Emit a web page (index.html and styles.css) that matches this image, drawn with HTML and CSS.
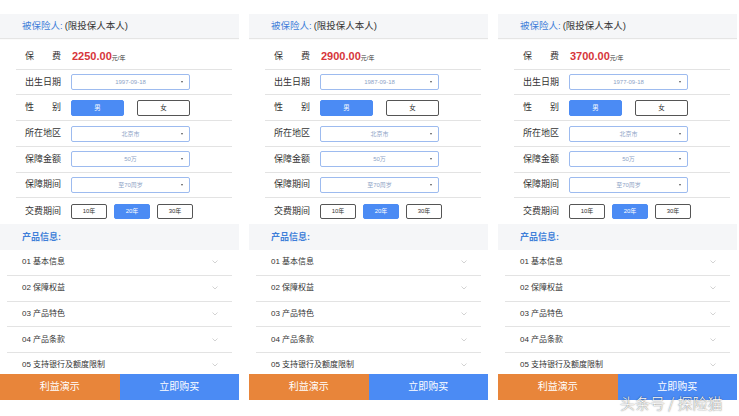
FILE: index.html
```html
<!DOCTYPE html>
<html lang="zh">
<head>
<meta charset="utf-8">
<link rel="stylesheet" href="styles.css">
</head>
<body>
<div class="screens">

  <div class="panel">
    <div class="insured"><span class="key">被保险人:</span><span class="note">(限投保人本人)</span></div>
    <div class="form">
      <div class="row"><div class="label"><span>保</span><span>费</span></div><div class="price">2250.00<span class="unit">元/年</span></div></div>
      <div class="row"><div class="label"><span>出生日期</span></div><div class="select">1997-09-18</div></div>
      <div class="row"><div class="label"><span>性</span><span>别</span></div><div class="seg gender"><div class="btn on">男</div><div class="btn">女</div></div></div>
      <div class="row"><div class="label"><span>所在地区</span></div><div class="select">北京市</div></div>
      <div class="row"><div class="label"><span>保障金额</span></div><div class="select">50万</div></div>
      <div class="row"><div class="label"><span>保障期间</span></div><div class="select">至70周岁</div></div>
      <div class="row"><div class="label"><span>交费期间</span></div><div class="seg years"><div class="btn">10年</div><div class="btn on">20年</div><div class="btn">30年</div></div></div>
    </div>
    <div class="section">产品信息:</div>
    <div class="list">
      <div class="item"><span>01 基本信息</span><svg class="chev" viewBox="0 0 6 4"><polyline points="0.5,0.5 3,3 5.5,0.5"/></svg></div>
      <div class="item"><span>02 保障权益</span><svg class="chev" viewBox="0 0 6 4"><polyline points="0.5,0.5 3,3 5.5,0.5"/></svg></div>
      <div class="item"><span>03 产品特色</span><svg class="chev" viewBox="0 0 6 4"><polyline points="0.5,0.5 3,3 5.5,0.5"/></svg></div>
      <div class="item"><span>04 产品条款</span><svg class="chev" viewBox="0 0 6 4"><polyline points="0.5,0.5 3,3 5.5,0.5"/></svg></div>
      <div class="item"><span>05 支持银行及额度限制</span><svg class="chev" viewBox="0 0 6 4"><polyline points="0.5,0.5 3,3 5.5,0.5"/></svg></div>
    </div>
    <div class="bar"><div class="demo">利益演示</div><div class="buy">立即购买</div></div>
  </div>

  <div class="panel">
    <div class="insured"><span class="key">被保险人:</span><span class="note">(限投保人本人)</span></div>
    <div class="form">
      <div class="row"><div class="label"><span>保</span><span>费</span></div><div class="price">2900.00<span class="unit">元/年</span></div></div>
      <div class="row"><div class="label"><span>出生日期</span></div><div class="select">1987-09-18</div></div>
      <div class="row"><div class="label"><span>性</span><span>别</span></div><div class="seg gender"><div class="btn on">男</div><div class="btn">女</div></div></div>
      <div class="row"><div class="label"><span>所在地区</span></div><div class="select">北京市</div></div>
      <div class="row"><div class="label"><span>保障金额</span></div><div class="select">50万</div></div>
      <div class="row"><div class="label"><span>保障期间</span></div><div class="select">至70周岁</div></div>
      <div class="row"><div class="label"><span>交费期间</span></div><div class="seg years"><div class="btn">10年</div><div class="btn on">20年</div><div class="btn">30年</div></div></div>
    </div>
    <div class="section">产品信息:</div>
    <div class="list">
      <div class="item"><span>01 基本信息</span><svg class="chev" viewBox="0 0 6 4"><polyline points="0.5,0.5 3,3 5.5,0.5"/></svg></div>
      <div class="item"><span>02 保障权益</span><svg class="chev" viewBox="0 0 6 4"><polyline points="0.5,0.5 3,3 5.5,0.5"/></svg></div>
      <div class="item"><span>03 产品特色</span><svg class="chev" viewBox="0 0 6 4"><polyline points="0.5,0.5 3,3 5.5,0.5"/></svg></div>
      <div class="item"><span>04 产品条款</span><svg class="chev" viewBox="0 0 6 4"><polyline points="0.5,0.5 3,3 5.5,0.5"/></svg></div>
      <div class="item"><span>05 支持银行及额度限制</span><svg class="chev" viewBox="0 0 6 4"><polyline points="0.5,0.5 3,3 5.5,0.5"/></svg></div>
    </div>
    <div class="bar"><div class="demo">利益演示</div><div class="buy">立即购买</div></div>
  </div>

  <div class="panel">
    <div class="insured"><span class="key">被保险人:</span><span class="note">(限投保人本人)</span></div>
    <div class="form">
      <div class="row"><div class="label"><span>保</span><span>费</span></div><div class="price">3700.00<span class="unit">元/年</span></div></div>
      <div class="row"><div class="label"><span>出生日期</span></div><div class="select">1977-09-18</div></div>
      <div class="row"><div class="label"><span>性</span><span>别</span></div><div class="seg gender"><div class="btn on">男</div><div class="btn">女</div></div></div>
      <div class="row"><div class="label"><span>所在地区</span></div><div class="select">北京市</div></div>
      <div class="row"><div class="label"><span>保障金额</span></div><div class="select">50万</div></div>
      <div class="row"><div class="label"><span>保障期间</span></div><div class="select">至70周岁</div></div>
      <div class="row"><div class="label"><span>交费期间</span></div><div class="seg years"><div class="btn">10年</div><div class="btn on">20年</div><div class="btn">30年</div></div></div>
    </div>
    <div class="section">产品信息:</div>
    <div class="list">
      <div class="item"><span>01 基本信息</span><svg class="chev" viewBox="0 0 6 4"><polyline points="0.5,0.5 3,3 5.5,0.5"/></svg></div>
      <div class="item"><span>02 保障权益</span><svg class="chev" viewBox="0 0 6 4"><polyline points="0.5,0.5 3,3 5.5,0.5"/></svg></div>
      <div class="item"><span>03 产品特色</span><svg class="chev" viewBox="0 0 6 4"><polyline points="0.5,0.5 3,3 5.5,0.5"/></svg></div>
      <div class="item"><span>04 产品条款</span><svg class="chev" viewBox="0 0 6 4"><polyline points="0.5,0.5 3,3 5.5,0.5"/></svg></div>
      <div class="item"><span>05 支持银行及额度限制</span><svg class="chev" viewBox="0 0 6 4"><polyline points="0.5,0.5 3,3 5.5,0.5"/></svg></div>
    </div>
    <div class="bar"><div class="demo">利益演示</div><div class="buy">立即购买</div></div>
  </div>

</div>
<div class="watermark">头条号 / 探险猫</div>
</body>
</html>
```

FILE: styles.css
```css
html, body {
  margin: 0;
  padding: 0;
  background: #fff;
}
body {
  width: 739px;
  height: 416px;
  overflow: hidden;
  position: relative;
  font-family: "Liberation Sans", "Noto Sans CJK SC", sans-serif;
  color: #333;
}
.screens {
  display: flex;
  gap: 10px;
}
.panel {
  flex: none;
  width: 239px;
  height: 400px;
  position: relative;
  overflow: hidden;
  background: #fff;
}
.insured {
  margin-top: 14px;
  height: 24px;
  background: #f5f6f8;
  box-shadow: 0 1px 1px rgba(0, 0, 0, 0.1);
  display: flex;
  align-items: center;
  padding-left: 22px;
  font-size: 9.5px;
  line-height: 1;
  color: #333;
}
.insured .key {
  color: #3f7fd9;
}
.insured .note {
  margin-left: 2px;
}
.form {
  padding: 6px 7px 0 16px;
}
.row {
  height: 25.72px;
  box-sizing: border-box;
  border-bottom: 1px solid #e3e3e3;
  display: flex;
  align-items: center;
  padding-left: 9px;
}
.row:last-child {
  border-bottom: none;
}
.label {
  flex: none;
  width: 36px;
  margin-right: 10px;
  display: flex;
  justify-content: space-between;
  font-size: 9px;
  line-height: 1;
  color: #333;
}
.price {
  color: #d6353a;
  font-size: 11px;
  font-weight: 700;
  line-height: 1;
  margin-left: 1px;
}
.price .unit {
  font-size: 6px;
  font-weight: 400;
  color: #333;
}
.select {
  position: relative;
  width: 119px;
  height: 16px;
  box-sizing: border-box;
  border: 1px solid #9dbbef;
  border-radius: 2px;
  display: flex;
  align-items: center;
  justify-content: center;
  font-size: 6px;
  line-height: 1;
  color: #8ea3c6;
}
.select::after {
  content: "";
  position: absolute;
  right: 6px;
  top: 6px;
  border-left: 1.5px solid transparent;
  border-right: 1.5px solid transparent;
  border-top: 2px solid #555;
}
.seg {
  display: flex;
}
.gender {
  gap: 13px;
}
.years {
  gap: 7px;
}
.btn {
  box-sizing: border-box;
  border: 1px solid #555;
  border-radius: 2px;
  display: flex;
  align-items: center;
  justify-content: center;
  font-size: 6.5px;
  line-height: 1;
  color: #333;
}
.gender .btn {
  width: 53px;
  height: 16px;
}
.years .btn {
  width: 36px;
  height: 15px;
  font-size: 6px;
}
.btn.on {
  background: #4b8bf4;
  border-color: #4b8bf4;
  color: #fff;
}
.section {
  height: 26px;
  background: #f5f6f8;
  display: flex;
  align-items: center;
  padding-left: 22px;
  font-size: 9px;
  font-weight: 700;
  line-height: 1;
  color: #3f7fd9;
}
.list {
  padding: 0 7px;
}
.item {
  height: 25.75px;
  box-sizing: border-box;
  border-bottom: 1px solid #e3e3e3;
  display: flex;
  align-items: center;
  justify-content: space-between;
  padding: 0 14px 0 15px;
  font-size: 8px;
  line-height: 1;
  color: #333;
}
.chev {
  width: 6px;
  height: 4px;
  fill: none;
  stroke: #c8c8c8;
  stroke-width: 0.8;
}
.bar {
  position: absolute;
  left: 0;
  right: 0;
  top: 374px;
  height: 26px;
  display: flex;
}
.bar > div {
  flex: 1;
  display: flex;
  align-items: center;
  justify-content: center;
  font-size: 10px;
  line-height: 1;
  color: #fff;
}
.demo {
  background: #e8853a;
}
.buy {
  background: #4b8bf4;
}
.watermark {
  position: absolute;
  left: 620px;
  top: 395px;
  font-family: "Noto Sans CJK SC", sans-serif;
  font-size: 15px;
  font-weight: 300;
  line-height: 1;
  color: #fff;
  text-shadow: 0 0 1px rgba(0, 0, 0, 0.6), 0 0 2px rgba(0, 0, 0, 0.3);
}
```
